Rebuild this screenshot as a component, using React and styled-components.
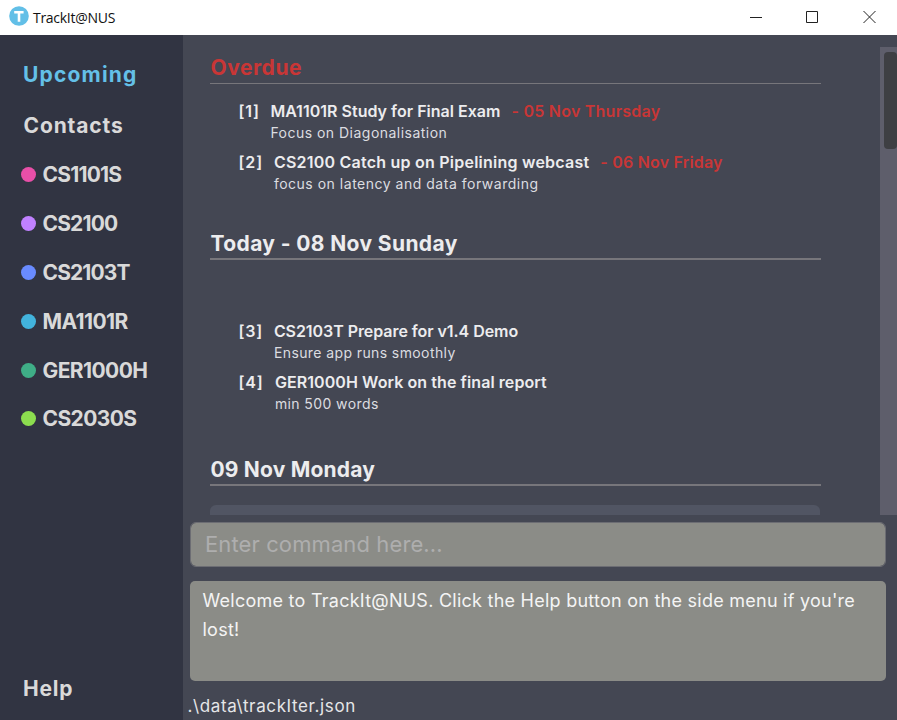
import React from 'react';
import styled, { createGlobalStyle } from 'styled-components';

const GlobalStyle = createGlobalStyle`
  * { box-sizing: border-box; }
  body { margin: 0; }
`;

const Window = styled.div`
  width: 897px;
  height: 720px;
  display: flex;
  flex-direction: column;
  overflow: hidden;
  background: #444753;
  font-family: Inter, "Open Sans", sans-serif;
  white-space: nowrap;
`;

const TitleBar = styled.header`
  height: 35px;
  flex: none;
  display: flex;
  align-items: center;
  padding-left: 9px;
  background: #ffffff;
`;

const AppName = styled.span`
  flex: 1;
  margin-left: 4px;
  font: 400 14px/20px "Open Sans", sans-serif;
  letter-spacing: -0.28px;
  color: #111111;
`;

const AppLogo = styled.svg`
  width: 20px;
  height: 20px;
  margin-top: -3px;
`;

const WindowButtons = styled.div`
  display: flex;
  gap: 43px;
  margin-right: 20px;
  margin-top: -2px;
`;

const ButtonIcon = styled.svg`
  width: 14px;
  height: 14px;
  fill: none;
  stroke: #222222;
`;

const Body = styled.div`
  flex: 1;
  min-height: 0;
  display: flex;
`;

const Sidebar = styled.nav`
  width: 183px;
  display: flex;
  flex-direction: column;
  padding: 13.6px 0 6.5px;
  background: #313442;
`;

const NavItem = styled.a`
  height: 51px;
  line-height: 51px;
  padding-left: ${(p) => p.$left ?? 23.5}px;
  font-size: 21px;
  font-weight: 700;
  letter-spacing: ${(p) => p.$spacing}px;
  color: ${(p) => (p.$active ? '#64c0e8' : '#d9d9d9')};
`;

const ModuleItem = styled.a`
  height: 48.8px;
  display: flex;
  align-items: center;
  gap: 6.5px;
  padding-left: 21px;
  font-size: 21px;
  font-weight: 700;
  letter-spacing: ${(p) => p.$spacing}px;
  color: #d9d9d9;
`;

const Dot = styled.span`
  width: 15px;
  height: 15px;
  border-radius: 50%;
  background: ${(p) => p.$color};
`;

const Spacer = styled.div`
  flex: 1;
`;

const Main = styled.main`
  flex: 1;
  min-width: 0;
  display: flex;
  flex-direction: column;
`;

const Scroller = styled.div`
  height: 468px;
  margin-top: 12px;
  display: flex;
  justify-content: space-between;
  overflow: hidden;
`;

const Agenda = styled.div`
  width: 611px;
  margin-left: 27px;
  padding-top: 4px;
`;

const Track = styled.div`
  width: 17px;
  padding: 5px 0 0 4px;
  background: #5e5e6b;
`;

const Thumb = styled.div`
  height: 97px;
  border-radius: 4px;
  background: #3e3f43;
`;

const Section = styled.section`
  height: ${(p) => p.$height}px;
`;

const Heading = styled.h2`
  height: ${(p) => (p.$overdue ? 33 : 32)}px;
  margin: 0;
  border-bottom: ${(p) => p.$rule}px solid #77767b;
  font-size: 21px;
  line-height: ${(p) => p.$line}px;
  font-weight: 700;
  letter-spacing: ${(p) => p.$spacing}px;
  text-indent: 0.5px;
  color: ${(p) => (p.$overdue ? '#c93636' : '#ececee')};
`;

const TaskList = styled.div`
  display: grid;
  gap: 6.5px;
  padding: ${(p) => p.$top}px 0 0 28.4px;
`;

const Task = styled.article`
  display: flex;
  line-height: 22px;
`;

const TaskIndex = styled.span`
  width: ${(p) => p.$width}px;
  font-size: 16px;
  font-weight: 600;
  letter-spacing: 0.9px;
  color: #ececee;
`;

const TaskTitle = styled.div`
  font-size: 16px;
  font-weight: 600;
  letter-spacing: ${(p) => p.$spacing}px;
  color: #ececee;
`;

const DueDate = styled.span`
  margin-left: 11px;
  letter-spacing: ${(p) => p.$spacing}px;
  color: #c93636;
`;

const TaskNote = styled.div`
  font-size: 14px;
  letter-spacing: ${(p) => p.$spacing}px;
  color: #dcdde0;
`;

const LessonCard = styled.div`
  width: 610px;
  height: 60px;
  margin-top: 19px;
  border-radius: 6px;
  background: #515563;
`;

const CommandBox = styled.div`
  height: 45px;
  margin: 7px 11px 0 7px;
  padding-left: 14px;
  border: 1px solid #6c6d73;
  border-radius: 6px;
  background: #8b8c87;
  background-clip: padding-box;
  font-size: 22px;
  line-height: 43px;
  letter-spacing: 0.11px;
  color: #aeaeae;
`;

const ResultBox = styled.div`
  height: 100px;
  margin: 14px 11px 0 7px;
  padding: 5px 12.5px;
  border-radius: 5px;
  background: #8b8c87;
  font-size: 18px;
  line-height: 29px;
  letter-spacing: 0.25px;
  color: #f4f4f4;
`;

const StatusBar = styled.footer`
  padding-left: 4.5px;
  margin-top: 13px;
  font-size: 17px;
  line-height: 24px;
  letter-spacing: 0.62px;
  color: #e6e6e8;
`;

const modules = [
  { name: 'CS1101S', color: '#e84fa8', spacing: -0.8 },
  { name: 'CS2100', color: '#c081ff', spacing: -0.85 },
  { name: 'CS2103T', color: '#698bff', spacing: -0.9 },
  { name: 'MA1101R', color: '#42b3dc', spacing: -0.6 },
  { name: 'GER1000H', color: '#3fae87', spacing: -0.58 },
  { name: 'CS2030S', color: '#8cdd4f', spacing: -0.6 },
];

const sections = [
  {
    title: 'Overdue', overdue: true, height: 177, rule: 1, line: 34, spacing: 0.54, top: 16,
    tasks: [
      { index: '[1]', width: 32, title: 'MA1101R Study for Final Exam', spacing: 0.02, due: '- 05 Nov Thursday', dueSpacing: 0.24, note: 'Focus on Diagonalisation', noteSpacing: 0.48 },
      { index: '[2]', width: 35.5, title: 'CS2100 Catch up on Pipelining webcast', spacing: 0.23, due: '- 06 Nov Friday', dueSpacing: 0.2, note: 'focus on latency and data forwarding', noteSpacing: 0.51 },
    ],
  },
  {
    title: 'Today - 08 Nov Sunday', height: 226, rule: 2, line: 32, spacing: 0.38, top: 60.2,
    tasks: [
      { index: '[3]', width: 35.5, title: 'CS2103T Prepare for v1.4 Demo', spacing: -0.06, note: 'Ensure app runs smoothly', noteSpacing: 0.4 },
      { index: '[4]', width: 36.5, title: 'GER1000H Work on the final report', spacing: 0.08, note: 'min 500 words', noteSpacing: 0.4 },
    ],
  },
  { title: '09 Nov Monday', height: 120, rule: 2, line: 32, spacing: 0.2, top: 0, tasks: [], card: true },
];

function TaskRow({ task }) {
  return (
    <Task>
      <TaskIndex $width={task.width}>{task.index}</TaskIndex>
      <div>
        <TaskTitle $spacing={task.spacing}>
          {task.title}
          {task.due && <DueDate $spacing={task.dueSpacing}>{task.due}</DueDate>}
        </TaskTitle>
        <TaskNote $spacing={task.noteSpacing}>{task.note}</TaskNote>
      </div>
    </Task>
  );
}

export default function App() {
  return (
    <Window>
      <GlobalStyle />
      <TitleBar>
        <AppLogo viewBox="0 0 20 20">
          <circle cx="10" cy="10" r="9.8" fill="#62bfe7" />
          <path d="M5.2 6.2h9.4M10 6.2v9.6" stroke="#fff" strokeWidth="2.6" fill="none" />
        </AppLogo>
        <AppName>TrackIt@NUS</AppName>
        <WindowButtons>
          <ButtonIcon viewBox="0 0 14 14"><path d="M1 7.5h12" /></ButtonIcon>
          <ButtonIcon viewBox="0 0 14 14"><path d="M0.5 1.5h11v11h-11z" /></ButtonIcon>
          <ButtonIcon viewBox="0 0 14 14"><path d="M0.5 1l12 12M12.5 1L0.5 13" /></ButtonIcon>
        </WindowButtons>
      </TitleBar>
      <Body>
        <Sidebar>
          <NavItem $active $left={22.9} $spacing={1.2}>Upcoming</NavItem>
          <NavItem $spacing={0.86}>Contacts</NavItem>
          {modules.map((m) => (
            <ModuleItem key={m.name} $spacing={m.spacing}>
              <Dot $color={m.color} />
              {m.name}
            </ModuleItem>
          ))}
          <Spacer />
          <NavItem $left={23} $spacing={0.75}>Help</NavItem>
        </Sidebar>
        <Main>
          <Scroller>
            <Agenda>
              {sections.map((s) => (
                <Section key={s.title} $height={s.height}>
                  <Heading $overdue={s.overdue} $rule={s.rule} $line={s.line} $spacing={s.spacing}>{s.title}</Heading>
                  {s.card ? <LessonCard /> : (
                    <TaskList $top={s.top}>
                      {s.tasks.map((t) => <TaskRow key={t.index} task={t} />)}
                    </TaskList>
                  )}
                </Section>
              ))}
            </Agenda>
            <Track><Thumb /></Track>
          </Scroller>
          <CommandBox>Enter command here...</CommandBox>
          <ResultBox>
            Welcome to TrackIt@NUS. Click the Help button on the side menu if you're
            <br />
            lost!
          </ResultBox>
          <StatusBar>.\data\trackIter.json</StatusBar>
        </Main>
      </Body>
    </Window>
  );
}
